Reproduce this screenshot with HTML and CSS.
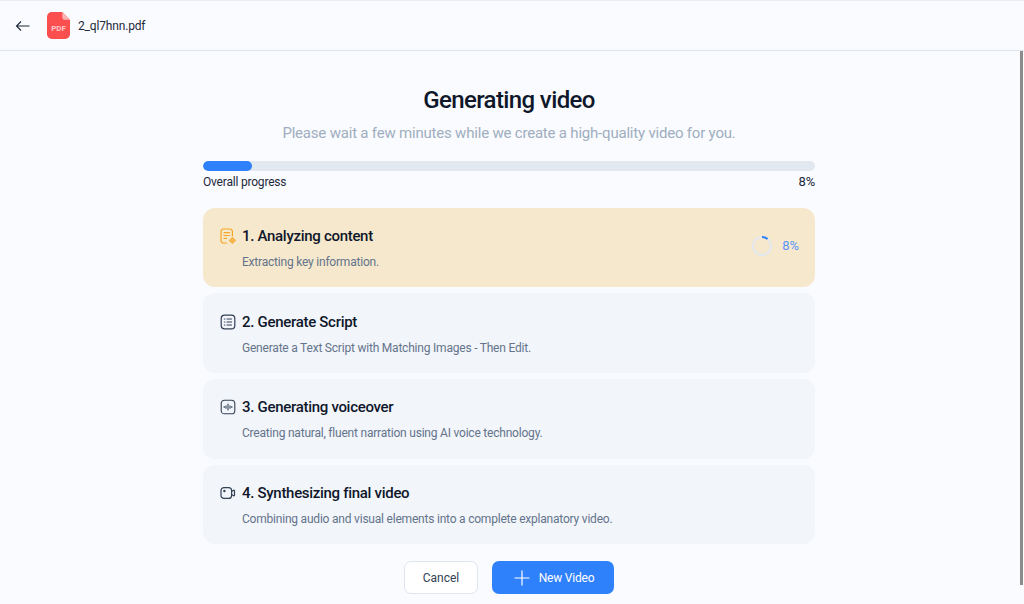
FILE: index.html
```html
<!DOCTYPE html>
<html lang="en">
<head>
	<meta charset="UTF-8">
	<title>Generating video</title>
	<link rel="stylesheet" href="styles.css">
</head>
<body>
	<div class="topbar">
		<a class="backBtn">
			<svg width="16" height="16" viewBox="0 0 16 16" fill="none" stroke="#1e293b" stroke-width="1.1"><path d="M14.5 8H1.5M6 3.5 1.5 8 6 12.5"/></svg>
		</a>
		<div class="pdfIcon">
			<svg width="23" height="27" viewBox="0 0 24 28"><path d="M5 0h11l8 8v15a5 5 0 0 1-5 5H5a5 5 0 0 1-5-5V5a5 5 0 0 1 5-5z" fill="#fb4f4f"/><path d="M16 0l8 8h-5a3 3 0 0 1-3-3z" fill="#fdb4b4"/></svg>
			<span class="pdfText">PDF</span>
		</div>
		<span class="fileName">2_ql7hnn.pdf</span>
	</div>
	<div class="main">
		<div class="content">
			<h1 class="title">Generating video</h1>
			<p class="subtitle">Please wait a few minutes while we create a high-quality video for you.</p>
			<div class="progress"><div class="progressBar"></div></div>
			<div class="progressInfo">
				<span>Overall progress</span>
				<span class="progressNum">8%</span>
			</div>
			<div class="steps">
				<div class="step active">
					<div class="stepHead">
						<svg class="stepIcon" width="16" height="16" viewBox="0 0 16 16" fill="none" stroke="#f5a623" stroke-width="1.2" stroke-linecap="round" stroke-linejoin="round"><path d="M6.6 15H3.6A2.6 2.6 0 0 1 1 12.4V3.6A2.6 2.6 0 0 1 3.6 1h6.2a2.6 2.6 0 0 1 2.6 2.6V8"/><path d="M4 4.7h5.4M4 7.5h5.4M4 10.3h2.6"/><path d="M12.4 9.8l2.7 2.7-2.7 2.7-2.7-2.7z"/><circle cx="12.4" cy="12.5" r=".5"/></svg>
						<h3 class="stepTitle">1. Analyzing content</h3>
					</div>
					<p class="stepDesc">Extracting key information.</p>
					<div class="stepStatus">
						<svg width="20" height="20" viewBox="0 0 20 20" fill="none" stroke-width="2"><circle cx="10" cy="10" r="9" stroke="#e2e8f0"/><path d="M10 1a9 9 0 0 1 5.6 2" stroke="#2f80fb"/></svg>
						<span>8%</span>
					</div>
				</div>
				<div class="step">
					<div class="stepHead">
						<svg class="stepIcon" width="16" height="16" viewBox="0 0 16 16" fill="none" stroke="#334155" stroke-width="1.2" stroke-linecap="round"><rect x="1.2" y="1.2" width="13.6" height="13.6" rx="3.4"/><path d="M7 5h4.5M7 8h4.5M7 11h4.5M4.4 5h.4M4.4 8h.4M4.4 11h.4"/></svg>
						<h3 class="stepTitle">2. Generate Script</h3>
					</div>
					<p class="stepDesc">Generate a Text Script with Matching Images - Then Edit.</p>
				</div>
				<div class="step">
					<div class="stepHead">
						<svg class="stepIcon" width="16" height="16" viewBox="0 0 16 16" fill="none" stroke="#334155" stroke-width="1.1" stroke-linecap="round"><rect x="1.2" y="1.2" width="13.6" height="13.6" rx="3.4"/><path d="M4.2 7.5v1M6 6.8v2.4M8 5v6M10 6.8v2.4M11.8 7.5v1"/></svg>
						<h3 class="stepTitle">3. Generating voiceover</h3>
					</div>
					<p class="stepDesc">Creating natural, fluent narration using AI voice technology.</p>
				</div>
				<div class="step">
					<div class="stepHead">
						<svg class="stepIcon" width="16" height="16" viewBox="0 0 16 16" fill="none" stroke="#334155" stroke-width="1.2" stroke-linejoin="round"><rect x="1" y="2.6" width="10.6" height="10.8" rx="3"/><path d="M11.6 6.4l2-1.2a.6.6 0 0 1 .9.5v4.6a.6.6 0 0 1-.9.5l-2-1.2"/><circle cx="4.4" cy="6" r=".6"/></svg>
						<h3 class="stepTitle">4. Synthesizing final video</h3>
					</div>
					<p class="stepDesc">Combining audio and visual elements into a complete explanatory video.</p>
				</div>
			</div>
			<div class="btns">
				<a class="btn cancelBtn">Cancel</a>
				<a class="btn newBtn">
					<svg width="16" height="16" viewBox="0 0 16 16" fill="none" stroke="#fff" stroke-width="1.2"><path d="M8 .5v15M.5 8h15"/></svg>
					New Video
				</a>
			</div>
		</div>
		<div class="scrollbar"><div class="thumb"></div></div>
	</div>
</body>
</html>
```

FILE: styles.css
```css
*{
	margin: 0;
	padding: 0;
	box-sizing: border-box;
}
html,body{
	height: 100%;
	overflow: hidden;
}
body{
	display: flex;
	flex-direction: column;
	background-color: #f9fbfe;
	font-family: Roboto, "Liberation Sans", sans-serif;
	color: #0f172a;
}
.topbar{
	display: flex;
	align-items: center;
	height: 51px;
	padding-left: 15px;
	border-top: 1px solid #e8ecf2;
	border-bottom: 1px solid #dde5ee;
	flex-shrink: 0;
}
.backBtn{
	display: flex;
	margin-right: 16px;
}
.pdfIcon{
	position: relative;
	display: flex;
	width: 23px;
	height: 27px;
	margin-right: 8px;
}
.pdfText{
	position: absolute;
	left: 0;
	right: 0;
	top: 12px;
	font-size: 8px;
	line-height: 9px;
	font-weight: 700;
	text-align: center;
	color: #ffc9c9;
}
.fileName{
	font-size: 12px;
	letter-spacing: -0.17px;
	color: #1e293b;
}
.main{
	flex: 1;
	display: flex;
	min-height: 0;
}
.content{
	flex: 1;
	display: flex;
	flex-direction: column;
	align-items: center;
	padding-top: 34px;
}
.title{
	font-size: 24px;
	line-height: 30px;
	font-weight: 500;
	letter-spacing: -0.62px;
}
.subtitle{
	margin-top: 8px;
	font-size: 15px;
	line-height: 20px;
	letter-spacing: -0.2px;
	color: #a0aec0;
}
.progress{
	width: 612px;
	height: 10px;
	margin-top: 18px;
	background-color: #e2e8f0;
	border-radius: 5px;
	overflow: hidden;
}
.progressBar{
	width: 8%;
	height: 100%;
	background-color: #2f80fb;
	border-radius: 5px;
}
.progressInfo{
	display: flex;
	justify-content: space-between;
	width: 612px;
	margin-top: 4px;
	font-size: 12px;
	line-height: 14px;
	letter-spacing: -0.2px;
	color: #1e293b;
}
.progressNum{
	font-size: 13px;
}
.steps{
	display: flex;
	flex-direction: column;
	gap: 6px;
	width: 612px;
	margin-top: 18.7px;
}
.step{
	position: relative;
	height: 79.67px;
	padding: 18.4px 16px 0 17px;
	background-color: #f2f5fa;
	border-radius: 12px;
}
.step.active{
	background-color: #f6e8cd;
}
.stepHead{
	display: flex;
	align-items: center;
	gap: 6px;
}
.stepIcon{
	flex-shrink: 0;
}
.stepTitle{
	font-size: 15px;
	line-height: 20px;
	font-weight: 500;
	letter-spacing: -0.3px;
	color: #0f172a;
}
.stepDesc{
	margin-top: 8px;
	padding-left: 22px;
	font-size: 12px;
	line-height: 16px;
	letter-spacing: -0.21px;
	color: #64748b;
}
.stepStatus{
	position: absolute;
	top: 28px;
	right: 16px;
	display: flex;
	align-items: center;
	gap: 10px;
	font-size: 13px;
	letter-spacing: -0.1px;
	color: #5b96f7;
}
.btns{
	display: flex;
	gap: 14px;
	margin-top: 17px;
}
.btn{
	display: flex;
	align-items: center;
	justify-content: center;
	height: 33px;
	border-radius: 7px;
	font-size: 12px;
	cursor: pointer;
}
.cancelBtn{
	width: 74px;
	background-color: #fff;
	border: 1px solid #dfe5ee;
	color: #334155;
}
.newBtn{
	gap: 9px;
	width: 122px;
	padding-left: 2px;
	letter-spacing: -0.2px;
	background-color: #2f80fb;
	color: #fff;
}
.scrollbar{
	flex-shrink: 0;
	width: 6px;
	padding-left: 2px;
}
.thumb{
	width: 3px;
	height: 534px;
	background-color: #8b8b8b;
}
```
